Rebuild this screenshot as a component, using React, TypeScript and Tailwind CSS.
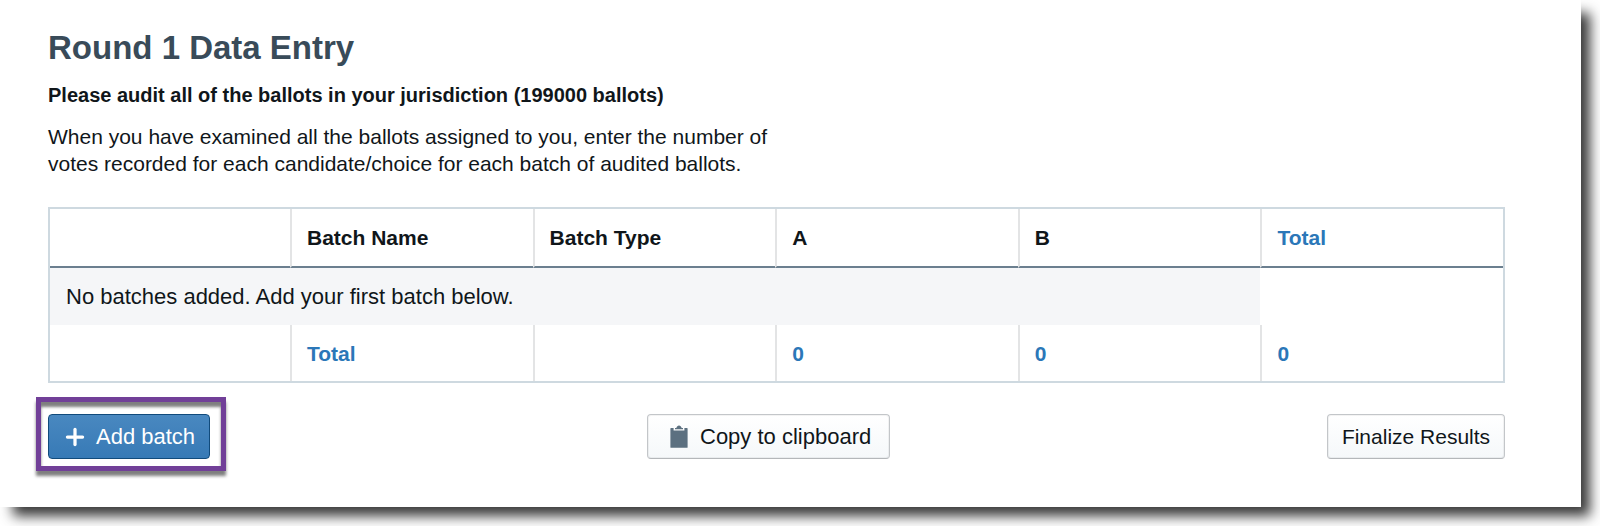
import { Plus } from 'lucide-react'

const headings = ['', 'Batch Name', 'Batch Type', 'A', 'B', 'Total']
const totals = ['', 'Total', '', '0', '0', '0']

function ClipboardIcon() {
  return (
    <svg className="h-6 w-[18px]" viewBox="0 0 18 24" fill="#5c7080" aria-hidden="true">
      <path d="M5 4.200V2.900h1.300C6.800 1.300 7.700.4 9 .4s2.200.9 2.700 2.500H13v1.300z" />
      <path d="M1 2.900h2.600v2.700h10.800V2.900H17a.6.6 0 0 1 .6.6v18.700a.6.6 0 0 1-.6.6H1a.6.6 0 0 1-.6-.6V3.500a.6.6 0 0 1 .6-.6z" />
    </svg>
  )
}

const lightButton =
  'flex h-[45px] cursor-pointer items-center rounded border border-[#c3c6c9] border-b-[#b4b7ba] bg-linear-to-b from-white to-[#f5f8fa] whitespace-nowrap shadow-[inset_0_0_0_1px_rgba(16,22,26,0.05)]'

export default function App() {
  return (
    <div className="overflow-hidden bg-white pr-[19px] pb-[19px] font-['Liberation_Sans',Arial,sans-serif] text-[21px] leading-[27px] text-[#10161a]">
      <main className="bg-white pt-7 pr-[76px] pb-12 pl-12 shadow-[11px_11px_12px_-2px_rgba(0,0,0,0.78)]">
        <h1 className="text-[33px] leading-10 font-bold text-[#394b59]">Round 1 Data Entry</h1>
        <p className="mt-[14px] text-[20px] font-bold">
          Please audit all of the ballots in your jurisdiction (199000 ballots)
        </p>
        <p className="mt-[14px] max-w-[750px]">
          When you have examined all the ballots assigned to you, enter the number of votes recorded
          for each candidate/choice for each batch of audited ballots.
        </p>
        <table className="mt-[30px] w-full table-fixed border-separate border-spacing-0 border-2 border-[#ced9e0]">
          <thead>
            <tr>
              {headings.map((h, i) => (
                <th
                  key={i}
                  scope="col"
                  className={`h-[59px] border-b-2 border-b-[#6b7f8f] px-[15px] text-left font-bold ${i > 0 ? 'border-l-2 border-l-[#e3e4e5]' : 'w-[240px]'} ${i === 5 ? 'text-[#2b77b8]' : ''}`}
                >
                  {h}
                </th>
              ))}
            </tr>
          </thead>
          <tbody>
            <tr>
              <td colSpan={5} className="h-[57px] bg-[#f5f6f8] px-4 text-[22px]">
                No batches added. Add your first batch below.
              </td>
              <td />
            </tr>
          </tbody>
          <tfoot>
            <tr>
              {totals.map((t, i) => (
                <td
                  key={i}
                  className={`h-14 px-[15px] font-bold text-[#2b77b8] ${i > 0 ? 'border-l-2 border-l-[#e3e4e5]' : ''}`}
                >
                  {t}
                </td>
              ))}
            </tr>
          </tfoot>
        </table>
        <div className="mt-[31px] flex items-center justify-between">
          <div className="relative">
            <button
              type="button"
              className="flex h-[45px] w-[162px] cursor-pointer items-center gap-2 rounded border border-[#114b7c] bg-linear-to-b from-[#4988c0] to-[#377ab6] pl-[13px] text-[22px] whitespace-nowrap text-white"
            >
              <Plus size={26} strokeWidth={3} aria-hidden="true" />
              Add batch
            </button>
            <div className="pointer-events-none absolute -top-[17px] -right-4 -bottom-3 -left-3 border-[5px] border-[#713f98] shadow-[0_5px_3px_rgba(0,0,0,0.5),inset_0_5px_3px_rgba(0,0,0,0.5)]" />
          </div>
          <button type="button" className={`${lightButton} w-[243px] gap-3 pl-[22px] text-[22px]`}>
            <ClipboardIcon />
            Copy to clipboard
          </button>
          <button type="button" className={`${lightButton} w-[178px] justify-center`}>
            Finalize Results
          </button>
        </div>
      </main>
    </div>
  )
}
